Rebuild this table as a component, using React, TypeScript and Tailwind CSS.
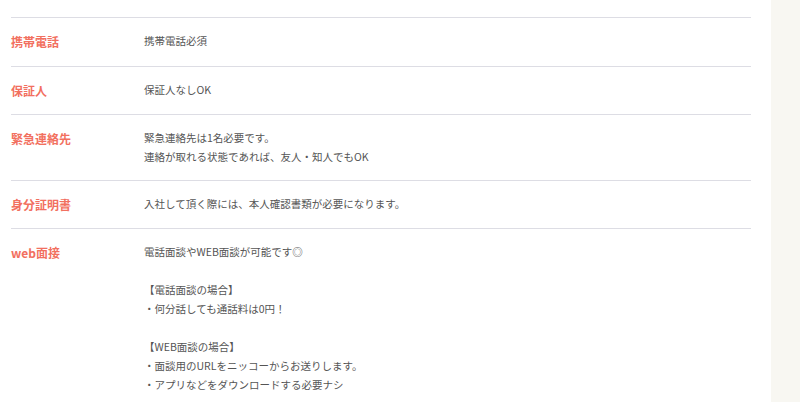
import React from 'react';

const rows: { label: string; lines: string[] }[] = [
  { label: '携帯電話', lines: ['携帯電話必須'] },
  { label: '保証人', lines: ['保証人なしOK'] },
  { label: '緊急連絡先', lines: ['緊急連絡先は1名必要です。', '連絡が取れる状態であれば、友人・知人でもOK'] },
  { label: '身分証明書', lines: ['入社して頂く際には、本人確認書類が必要になります。'] },
  {
    label: 'web面接',
    lines: [
      '電話面談やWEB面談が可能です◎',
      '',
      '【電話面談の場合】',
      '・何分話しても通話料は0円！',
      '',
      '【WEB面談の場合】',
      '・面談用のURLをニッコーからお送りします。',
      '・アプリなどをダウンロードする必要ナシ',
    ],
  },
];

export default function App() {
  return (
    <div className="flex w-[800px] h-[402px] overflow-hidden bg-white font-['Noto_Sans_CJK_JP','Noto_Sans',sans-serif]">
      <div className="w-[771px] pl-[11px] pr-[20px] pt-[17px]">
        <div className="border-t border-[#dddde4]">
          {rows.map((r, idx) => (
            <div key={r.label} className="flex border-b border-[#dddde4]">
              <div
                className={`w-[133px] shrink-0 pt-[14px] text-[12px] leading-[19px] font-bold text-[#f2705f] ${
                  idx === 0 ? 'pb-[15px]' : 'pb-[14px]'
                }`}
              >
                {r.label}
              </div>
              <div className="pt-[13px] pb-[14px] text-[10.5px] leading-[19px] text-[#555]">
                {r.lines.map((l, i) => (
                  <div key={i} className="h-[19px]">{l}</div>
                ))}
              </div>
            </div>
          ))}
        </div>
      </div>
      <div className="flex-1 bg-[#f8f7f2]" />
    </div>
  );
}
